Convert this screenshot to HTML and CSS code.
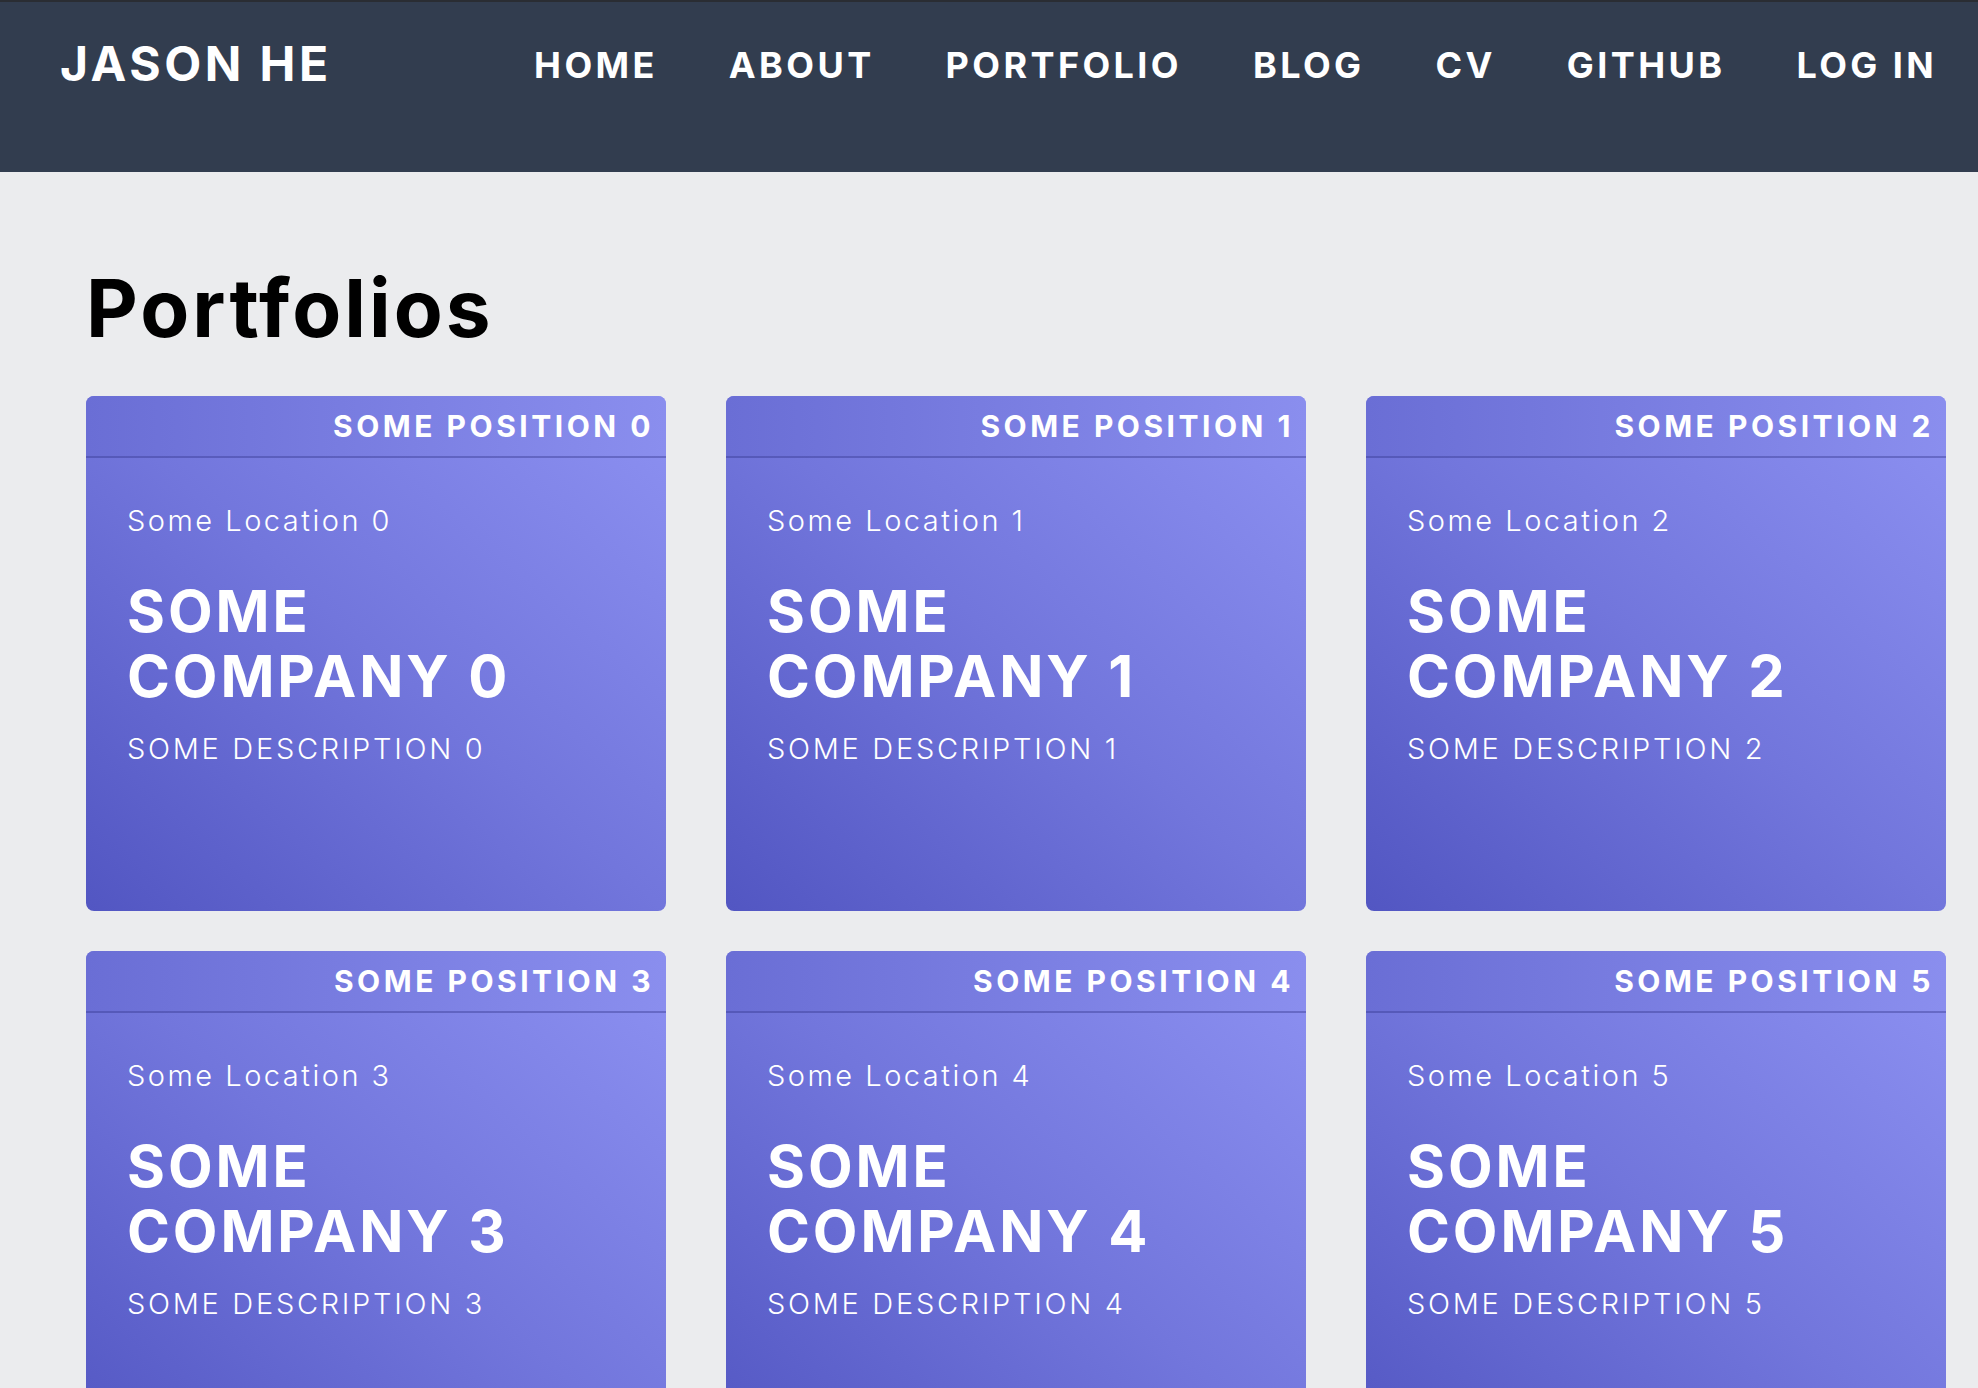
FILE: index.html
```html
<!DOCTYPE html>
<html lang="en">
<head>
<meta charset="utf-8">
<title>Jason He - Portfolios</title>
<link rel="stylesheet" href="styles.css">
</head>
<body>
<header class="navbar">
  <a class="brand" href="#">JASON HE</a>
  <nav class="nav">
    <a href="#">HOME</a>
    <a href="#">ABOUT</a>
    <a href="#">PORTFOLIO</a>
    <a href="#">BLOG</a>
    <a href="#">CV</a>
    <a href="#">GITHUB</a>
    <a href="#">LOG IN</a>
  </nav>
</header>
<main class="page">
  <h1 class="title">Portfolios</h1>
  <div class="grid">
    <article class="card">
      <div class="card-head">SOME POSITION 0</div>
      <div class="card-body">
        <p class="loc">Some Location 0</p>
        <h2 class="company">SOME<br>COMPANY 0</h2>
        <p class="desc">SOME DESCRIPTION 0</p>
      </div>
    </article>
    <article class="card">
      <div class="card-head">SOME POSITION 1</div>
      <div class="card-body">
        <p class="loc">Some Location 1</p>
        <h2 class="company">SOME<br>COMPANY 1</h2>
        <p class="desc">SOME DESCRIPTION 1</p>
      </div>
    </article>
    <article class="card">
      <div class="card-head">SOME POSITION 2</div>
      <div class="card-body">
        <p class="loc">Some Location 2</p>
        <h2 class="company">SOME<br>COMPANY 2</h2>
        <p class="desc">SOME DESCRIPTION 2</p>
      </div>
    </article>
    <article class="card">
      <div class="card-head">SOME POSITION 3</div>
      <div class="card-body">
        <p class="loc">Some Location 3</p>
        <h2 class="company">SOME<br>COMPANY 3</h2>
        <p class="desc">SOME DESCRIPTION 3</p>
      </div>
    </article>
    <article class="card">
      <div class="card-head">SOME POSITION 4</div>
      <div class="card-body">
        <p class="loc">Some Location 4</p>
        <h2 class="company">SOME<br>COMPANY 4</h2>
        <p class="desc">SOME DESCRIPTION 4</p>
      </div>
    </article>
    <article class="card">
      <div class="card-head">SOME POSITION 5</div>
      <div class="card-body">
        <p class="loc">Some Location 5</p>
        <h2 class="company">SOME<br>COMPANY 5</h2>
        <p class="desc">SOME DESCRIPTION 5</p>
      </div>
    </article>
  </div>
</main>
</body>
</html>
```
FILE: styles.css
```css
html, body {
  margin: 0;
  padding: 0;
}
body {
  background: #ebecee;
  font-family: Inter, "Noto Sans", sans-serif;
  color: #000;
  overflow: hidden;
}
a {
  color: inherit;
  text-decoration: none;
}
.navbar {
  height: 170px;
  background: #323d4f;
  border-top: 2px solid #2a2d33;
  display: flex;
  justify-content: space-between;
  align-items: flex-start;
  padding: 0 41px 0 60px;
  color: #fff;
}
.brand {
  margin-top: 38px;
  font-size: 48px;
  line-height: 1;
  font-weight: 700;
  letter-spacing: 3.5px;
}
.nav {
  margin-top: 45px;
  display: flex;
  gap: 71px;
}
.nav a {
  font-size: 36px;
  line-height: 1;
  font-weight: 700;
  letter-spacing: 3.4px;
}
.page {
  padding: 96px 0 0 86px;
}
.title {
  margin: 0 0 48px;
  font-size: 80px;
  line-height: 1;
  font-weight: 700;
  letter-spacing: 3px;
}
.grid {
  display: grid;
  grid-template-columns: repeat(3, 580px);
  column-gap: 60px;
  row-gap: 40px;
}
.card {
  height: 515px;
  border-radius: 8px;
  overflow: hidden;
  color: #fff;
  background: linear-gradient(to top right, #5256c2 0%, #7276dc 50%, #8d91f2 100%);
}
.card-head {
  height: 62px;
  box-sizing: border-box;
  padding: 15px 12px 0;
  text-align: right;
  font-size: 30px;
  line-height: 1;
  font-weight: 700;
  letter-spacing: 3.5px;
  background: linear-gradient(to right, #6a6ed5, #8a8eee);
  border-bottom: 2px solid rgba(60, 62, 150, 0.45);
}
.card-body {
  padding: 48px 40px 0 41px;
}
.loc {
  margin: 0;
  font-size: 29px;
  line-height: 1;
  font-weight: 300;
  letter-spacing: 2.5px;
}
.company {
  margin: 44px 0 0;
  font-size: 58px;
  line-height: 65px;
  font-weight: 700;
  letter-spacing: 2.9px;
}
.desc {
  margin: 25px 0 0;
  font-size: 29px;
  line-height: 1;
  font-weight: 300;
  letter-spacing: 2.7px;
}
```
